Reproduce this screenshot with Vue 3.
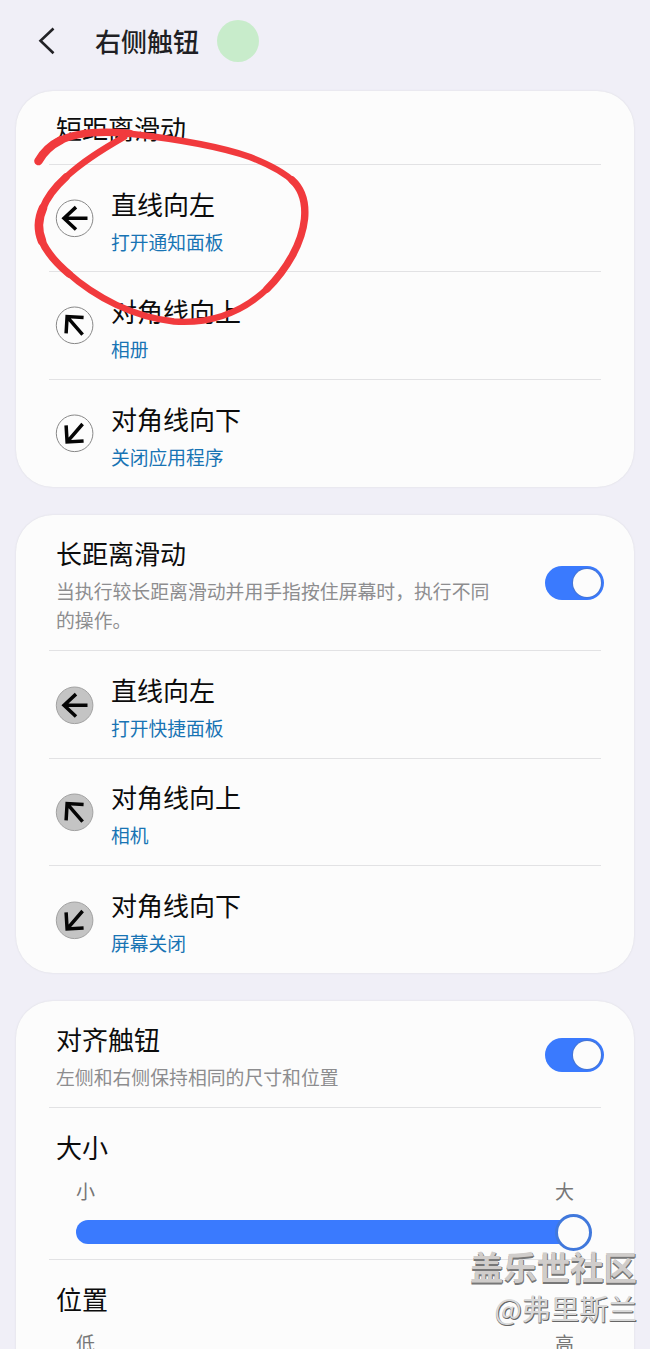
<template>
  <div class="page">
    <header class="header">
      <svg class="back" viewBox="0 0 24 32" width="24" height="32">
        <path d="M20.500 3.500 L7.500 15.800 L20.500 28.300" />
      </svg>
      <h1>右侧触钮</h1>
      <span class="dot"></span>
    </header>

    <section v-for="group in groups" :key="group.title" class="card">
      <div class="head" :class="{ short: !group.desc }">
        <div class="head-text">
          <div class="title">{{ group.title }}</div>
          <p v-if="group.desc" class="desc">{{ group.desc }}</p>
        </div>
        <span v-if="group.desc" class="switch"></span>
      </div>
      <div v-for="item in group.items" :key="item.label" class="row">
        <svg class="arrow" :class="{ filled: group.filled }" viewBox="0 0 38 38" width="38" height="38">
          <circle cx="18.6" cy="19.300" r="18.3" />
          <path :d="arrows[item.dir]" />
        </svg>
        <div class="row-text">
          <div class="title">{{ item.label }}</div>
          <div class="action">{{ item.action }}</div>
        </div>
      </div>
    </section>

    <section class="card last">
      <div class="head align">
        <div class="head-text">
          <div class="title">对齐触钮</div>
          <p class="desc">左侧和右侧保持相同的尺寸和位置</p>
        </div>
        <span class="switch"></span>
      </div>
      <div v-for="s in sliders" :key="s.title" class="slider-row">
        <div class="title">{{ s.title }}</div>
        <div class="range">
          <span>{{ s.min }}</span>
          <span>{{ s.max }}</span>
        </div>
        <div class="slider">
          <div class="track" :style="{ width: s.value + '%' }"></div>
          <span class="thumb"></span>
        </div>
      </div>
    </section>

    <!-- hand-drawn mark -->
    <svg class="mark" viewBox="0 0 650 400" width="650" height="400">
      <path class="w9" d="M38.500 161 C44 151 51 145 61 140" />
      <path class="w7" d="M58 141.500 C76 132 104 131 130 133.500" />
      <path class="w6" d="M128 133.500 C168 138 216 145 250 157 C268 164 284 172 294 182" />
      <path class="w7" d="M292 180 C303 190 306 203 304.500 219 C302 243 287 269 267 289" />
      <path class="w6" d="M268 288 C242 313 211 324 174 321.500 C134 317 96 298 67 272" />
      <path class="w7" d="M69 274 C56 263 46 251 41.500 240" />
      <path class="w9" d="M42 241 C37.500 230 38 219 43 208" />
      <path class="w7" d="M42.500 209 C47 197 55 187 66 177" />
      <path class="w6" d="M65 178 C83 161 103 149 124 137" />
    </svg>

    <div class="watermark">
      <div class="site">盖乐世社区</div>
      <div class="author">@弗里斯兰</div>
    </div>
  </div>
</template>

<script setup>
const arrows = {
  left: 'M31.500 19.300 H8 M20 8.100 L8 19.300 L20 30.500',
  up: 'M26.600 28.600 L11.600 11.300 M27.600 11.600 L11.100 10.600 L10.100 27.300',
  down: 'M26.600 10 L11.600 27.300 M27.600 27 L11.100 28 L10.100 11.300'
}

const groups = [
  {
    title: '短距离滑动',
    items: [
      { dir: 'left', label: '直线向左', action: '打开通知面板' },
      { dir: 'up', label: '对角线向上', action: '相册' },
      { dir: 'down', label: '对角线向下', action: '关闭应用程序' }
    ]
  },
  {
    title: '长距离滑动',
    desc: '当执行较长距离滑动并用手指按住屏幕时，执行不同的操作。',
    filled: true,
    items: [
      { dir: 'left', label: '直线向左', action: '打开快捷面板' },
      { dir: 'up', label: '对角线向上', action: '相机' },
      { dir: 'down', label: '对角线向下', action: '屏幕关闭' }
    ]
  }
]

const sliders = [
  { title: '大小', min: '小', max: '大', value: 100 },
  { title: '位置', min: '低', max: '高', value: 50 }
]
</script>

<style>
body {
  background: #f0eff7;
}
</style>

<style scoped>
.page {
  box-sizing: border-box;
  position: relative;
  height: 1349px;
  overflow: hidden;
  padding: 0 16px;
  background: #f0eff7;
  color: #0c0c0c;
  font-family: 'Noto Sans CJK SC', sans-serif;
}
.header {
  display: flex;
  align-items: center;
  height: 82px;
  padding: 0 0 8.6px 17px;
}
.back {
  fill: none;
  stroke: #222226;
  stroke-width: 2.6;
}
h1 {
  margin: 0 18px 0 38px;
  font-size: 26px;
  line-height: 38px;
  font-weight: 500;
  color: #1f1f24;
}
.dot {
  width: 42px;
  height: 42px;
  border-radius: 50%;
  background: #c8eccb;
}
.card {
  box-sizing: border-box;
  padding: 0 33px;
  margin-bottom: 28px;
  border-radius: 37px;
  background: #fcfcfc;
  box-shadow: 0 0 2px #d8d8de;
}
.card:nth-of-type(1) {
  height: 396.8px;
}
.card:nth-of-type(2) {
  height: 458px;
}
.card.last {
  height: 420px;
}
.head {
  box-sizing: border-box;
  display: flex;
  align-items: center;
  justify-content: space-between;
  height: 136px;
  padding-left: 7px;
  border-bottom: 1px solid #e2e2e4;
}
.head.short {
  height: 74.3px;
  padding-top: 2px;
}
.head.align {
  height: 107px;
}
.head-text {
  width: 440px;
}
.title {
  font-size: 26px;
  line-height: 38px;
}
.desc {
  margin: 0;
  padding-top: 4px;
  font-size: 18.85px;
  line-height: 29px;
  color: #8d8d8f;
}
.head:not(.short) .head-text {
  padding-top: 3px;
}
.switch {
  box-sizing: border-box;
  display: flex;
  justify-content: flex-end;
  width: 59px;
  height: 34px;
  margin-right: -3px;
  padding: 3px;
  border-radius: 17px;
  background: #3a7afe;
}
.align .switch {
  margin-top: 1px;
}
.switch::after {
  content: '';
  width: 28px;
  height: 28px;
  border-radius: 50%;
  background: #fcfcfc;
  box-shadow: 0 0 1px 1px #4674cf;
}
.row {
  box-sizing: border-box;
  display: flex;
  align-items: center;
  height: 107.4px;
  padding-left: 7px;
  border-bottom: 1px solid #e2e2e4;
}
.row:last-child {
  border-bottom: 0;
}
.arrow {
  flex: none;
  fill: none;
  overflow: visible;
}
.arrow circle {
  stroke: #888;
  stroke-width: 1;
}
.arrow.filled circle {
  fill: #c4c4c4;
  stroke: #a2a2a2;
}
.arrow path {
  stroke: #050505;
  stroke-width: 3.5;
}
.row-text {
  padding: 9px 0 0 17px;
}
.action {
  font-size: 18.75px;
  line-height: 38px;
  color: #1874b4;
}
.slider-row {
  box-sizing: border-box;
  height: 152px;
  padding: 20px 9px 0 7px;
  border-bottom: 1px solid #e2e2e4;
}
.range {
  display: flex;
  justify-content: space-between;
  padding: 11px 18px 0 20px;
  font-size: 19px;
  line-height: 28px;
  color: #777;
}
.slider {
  display: flex;
  align-items: center;
  height: 38px;
  padding: 8px 0 0 20px;
}
.track {
  height: 24px;
  margin-right: -19px;
  border-radius: 12px;
  background: #3a7afe;
}
.thumb {
  box-sizing: border-box;
  flex: none;
  width: 37px;
  height: 37px;
  border: 3px solid #4078dc;
  border-radius: 50%;
  background: #fcfcfc;
}
.mark {
  position: absolute;
  left: 0;
  top: 0;
  fill: none;
  stroke: #f13a3d;
  stroke-linecap: round;
  stroke-linejoin: round;
}
.w6 {
  stroke-width: 6.4;
}
.w7 {
  stroke-width: 7.4;
}
.w9 {
  stroke-width: 8.6;
}
.watermark {
  position: absolute;
  right: 13px;
  bottom: 20px;
  text-align: right;
  white-space: nowrap;
}
.site {
  font-size: 33.4px;
  line-height: 43px;
  font-weight: 700;
  color: #d0cdcb;
  text-shadow: 1px 1px 0 #777, 0 2px 0 #777;
}
.author {
  font-size: 28.8px;
  line-height: 42px;
  color: #d8d8d8;
  text-shadow: 1px 1px 0 #666, 0 1px 0 #777;
}
</style>
